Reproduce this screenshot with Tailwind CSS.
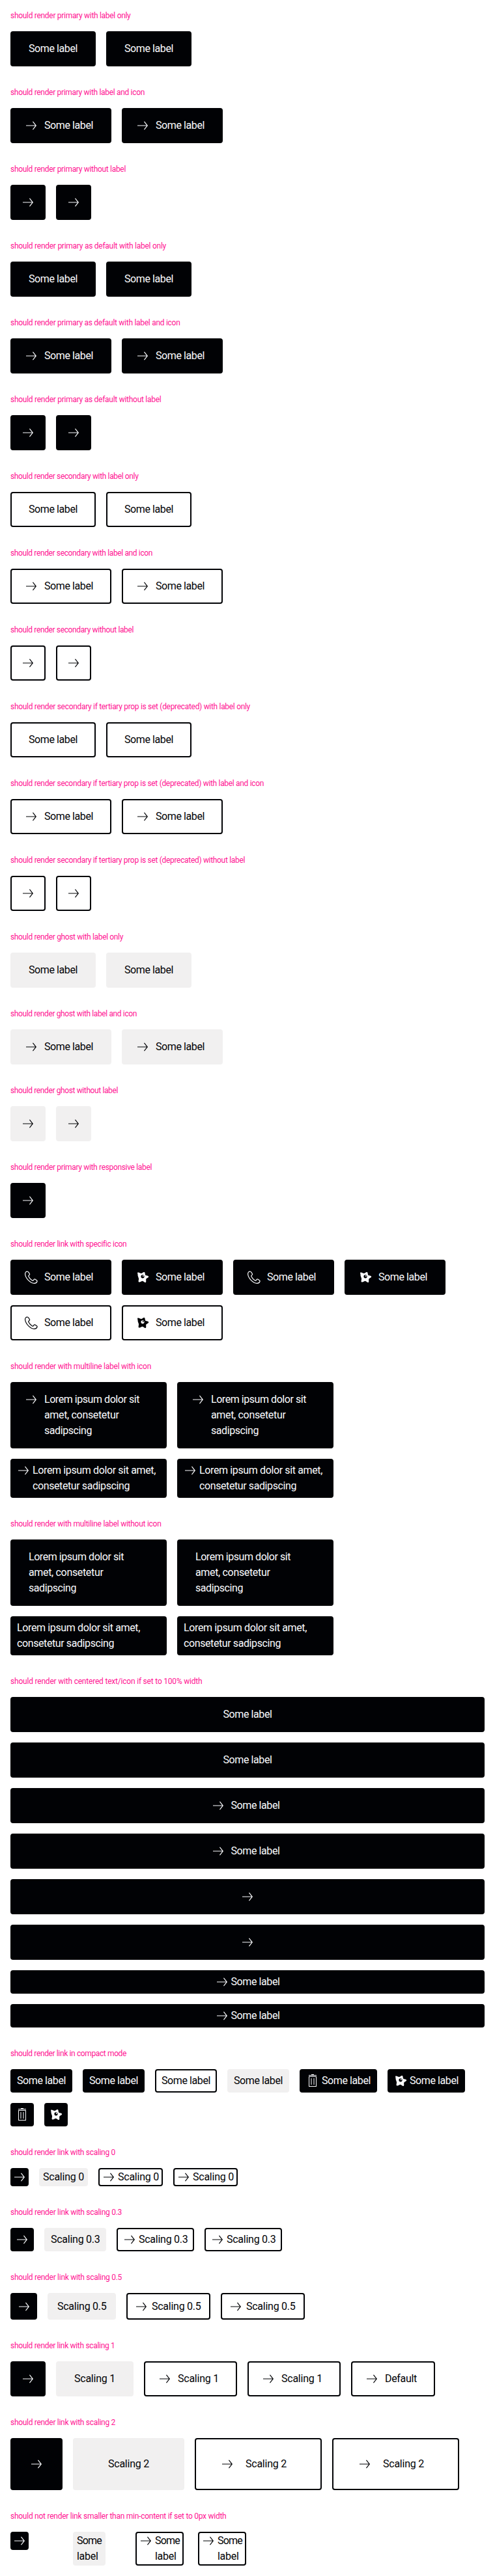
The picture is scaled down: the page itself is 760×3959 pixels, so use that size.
<!DOCTYPE html>
<html lang="en">
<head>
<meta charset="utf-8">
<title>Link variants</title>
<script src="https://cdn.jsdelivr.net/npm/@tailwindcss/browser@4"></script>
</head>
<body class="bg-white font-[Roboto,'Liberation_Sans',sans-serif]">
<svg class="hidden">
  <symbol id="arrow" viewBox="0 0 24 24"><path d="m20 12-5.12 6.5-.88-.7 4.1-5.3H4v-1h14.100L14 6.200l.88-.7z" fill="currentColor"/></symbol>
  <symbol id="phone" viewBox="0 0 24 24"><path d="M6.300 3.200C4.600 2.600 2.400 4.400 2.600 7.200c.3 3.200 2.300 6.700 5.200 9.700 3 2.900 5.600 4.400 8.700 4.400 2.300 0 3.900-1.200 4.500-2.800.3-.8 0-1.300-.6-1.700l-2.600-1.700c-.6-.4-1.200-.3-1.600.2l-1.100 1.500c-.4.5-.9.600-1.500.2-2.300-1.400-4.500-3.800-5.700-6.300-.3-.6-.2-1.100.3-1.500l1-1c.5-.5.5-.9.2-1.500L7.700 4.100c-.3-.6-.8-.7-1.400-.9Z" fill="none" stroke="currentColor" stroke-width="1.200"/></symbol>
  <symbol id="star" viewBox="0 0 24 24"><path fill-rule="evenodd" fill="currentColor" d="M4.300 4.800c1-1 3.600.8 5.600 1.200 1.600-.2 3-2.300 4.600-2 1.500.3 1 3.200 1.700 4.600 1 1.200 4.700.8 5 2.500.2 1.700-3.200 2.300-3.900 3.700-.5 1.500.7 4.300-.7 5.100-1.500.7-3.100-2-4.800-2.200-1.900.1-4.200 2.500-5.700 1.500-1.300-1 .3-3.500-.1-5.300C5.500 11.900 4.700 10.500 4.500 9c.5-1.500-1-3-.2-4.200ZM12 8.200a2.600 2.600 0 1 0 0 5.200 2.600 2.600 0 0 0 0-5.200Zm.8.900a.9.900 0 1 1 0 1.800.9.900 0 0 1 0-1.800Z"/></symbol>
  <symbol id="trash" viewBox="0 0 24 24"><path fill="currentColor" fill-rule="evenodd" d="M10 2h4v1h4v1H6V3h4zM6 5h12v16H6zM7 6v14h10V6zM9.500 8h1v10h-1zm4 0h1v10h-1z"/></symbol>
</svg>
<main id="page"></main>
<script>
const tones = {
  primary: 'bg-[#010205] border-[#010205] text-[#fbfcff]',
  secondary: 'bg-white border-[#010205] text-[#010205]',
  ghost: 'bg-[#f1f0f0] border-[#f1f0f0] text-[#010205]',
};
// Padding and icon gap for each density, inside the 2px border.
const sizes = {
  base:  { only: 'py-[13px] px-[13px]', text: 'py-[13px] px-[26px]', both: 'py-[13px] pl-[18px] pr-[26px] gap-2' },
  mini:  { only: 'py-0 px-0', text: 'py-0 px-1', both: 'py-0 pl-[2px] pr-1 gap-[2px]' },
  small: { only: 'py-1 px-1', text: 'py-1 px-2', both: 'py-1 pl-[6px] pr-2 gap-[2px]' },
  half:  { only: 'py-[6.5px] px-[6.5px]', text: 'py-[6.5px] px-[13px]', both: 'py-[6.5px] pl-[9px] pr-[13px] gap-1' },
  large: { only: 'py-[26px] px-[26px]', text: 'py-[26px] px-[52px]', both: 'py-[26px] pl-[36px] pr-[52px] gap-4' },
};
// Fixed label widths keep the columns steady; fit() spaces the letters to that width.
const labels = {
  'Some label': ['w-[75px]', 75], 'Scaling 0': ['w-[63px]', 63], 'Scaling 1': ['w-[63px]', 63], 'Scaling 2': ['w-[63px]', 63],
  'Scaling 0.3': ['w-[75px]', 75.5], 'Scaling 0.5': ['w-[75px]', 75.5], 'Default': ['w-[49px]', 49],
};
const pen = document.createElement('canvas').getContext('2d');
function fit(text, px, font = '16px Roboto') {
  pen.font = font;
  const gap = (px - pen.measureText(text).width) / text.length;
  return `<span class="whitespace-nowrap" style="letter-spacing:${gap.toFixed(3)}px">${text}</span>`;
}
function link(tone, label, icon, size = 'base', extra = '') {
  const s = sizes[size];
  const pad = label && icon ? s.both : label ? s.text : s.only;
  const svg = icon ? `<svg class="size-6 shrink-0"><use href="#${icon}"/></svg>` : '';
  const known = labels[label];
  const text = label ? (known ? `<span class="${known[0]}">${fit(label, known[1])}</span>` : label) : '';
  return `<a class="inline-flex items-start rounded border-2 text-base leading-6 ${tones[tone]} ${pad} ${extra}">${svg}${text}</a>`;
}
const twice = s => s + s;
const L = 'Some label';
const sections = [];
const add = (title, titleWidth, body, layout = 'flex flex-wrap items-start gap-4') => sections.push([title, titleWidth, body, layout]);
for (const [name, tone, widths] of [
  ['primary', 'primary', [184.5, 206, 177]],
  ['primary as default', 'primary', [239, 260.5, 231.5]],
  ['secondary', 'secondary', [196.5, 218, 189]],
  ['secondary if tertiary prop is set (deprecated)', 'secondary', [368, 389, 360]],
  ['ghost', 'ghost', [173, 194, 165]]]) {
  add(`should render ${name} with label only`, widths[0], twice(link(tone, L)));
  add(`should render ${name} with label and icon`, widths[1], twice(link(tone, L, 'arrow')));
  add(`should render ${name} without label`, widths[2], twice(link(tone, '', 'arrow')));
}
add('should render primary with responsive label', 217, link('primary', '', 'arrow'));
add('should render link with specific icon', 178, twice(link('primary', L, 'phone') + link('primary', L, 'star')) +
  link('secondary', L, 'phone') + link('secondary', L, 'star'));
const three = `<span class="block">${fit('Lorem ipsum dolor sit', 146)}<br>${fit('amet, consetetur', 114.5)}<br>${fit('sadipscing', 73)}</span>`;
const two = `<span class="block whitespace-nowrap">${fit('Lorem ipsum dolor sit amet,', 189)}<br>${fit('consetetur sadipscing', 149)}</span>`;
for (const [name, icon, width] of [['with', 'arrow', 216], ['without', '', 231.5]])
  add(`should render with multiline label ${name} icon`, width,
    twice(link('primary', three, icon, 'base', 'w-60')) + twice(link('primary', two, icon, 'small', 'w-60')),
    'grid grid-cols-[240px_240px] gap-4');
const full = 'w-full justify-center';
add('should render with centered text/icon if set to 100% width', 294.5,
  twice(link('primary', L, '', 'base', full)) + twice(link('primary', L, 'arrow', 'base', full)) +
  twice(link('primary', '', 'arrow', 'base', full)) + twice(link('primary', L, 'arrow', 'small', full)), 'flex flex-col gap-4');
add('should render link in compact mode', 178, link('primary', L, '', 'small') + link('primary', L, '', 'small') +
  link('secondary', L, '', 'small') + link('ghost', L, '', 'small') + link('primary', L, 'trash', 'small') +
  link('primary', L, 'star', 'small') + link('primary', '', 'trash', 'small') + link('primary', '', 'star', 'small'));
for (const [n, size, width] of [['0', 'mini', 161], ['0.3', 'small', 171], ['0.5', 'half', 171], ['1', 'base', 160.5], ['2', 'large', 161]])
  add(`should render link with scaling ${n}`, width, link('primary', '', 'arrow', size) + link('ghost', 'Scaling ' + n, '', size) +
    twice(link('secondary', 'Scaling ' + n, 'arrow', size)) + (n === '1' ? link('secondary', 'Default', 'arrow', size) : ''));
const narrow = `<span class="block w-[38px]">${fit('Some', 38)}<br>${fit('label', 32.5)}</span>`;
add('should not render link smaller than min-content if set to 0px width', 331.5,
  [link('primary', '', 'arrow', 'mini'), link('ghost', narrow, '', 'mini'), link('secondary', narrow, 'arrow', 'mini'), link('secondary', narrow, 'arrow', 'mini')]
    .map(a => `<div class="flex w-20 items-start">${a}</div>`).join(''), 'flex items-start gap-4');
document.getElementById('page').innerHTML = sections.map(([title, width, body, layout]) =>
  `<section class="p-4"><h2 class="mb-4 h-4 text-xs leading-[17px] text-[#ff1493]">${fit(title, width, '12px Roboto')}</h2><div class="${layout}">${body}</div></section>`).join('');
</script>
</body>
</html>
